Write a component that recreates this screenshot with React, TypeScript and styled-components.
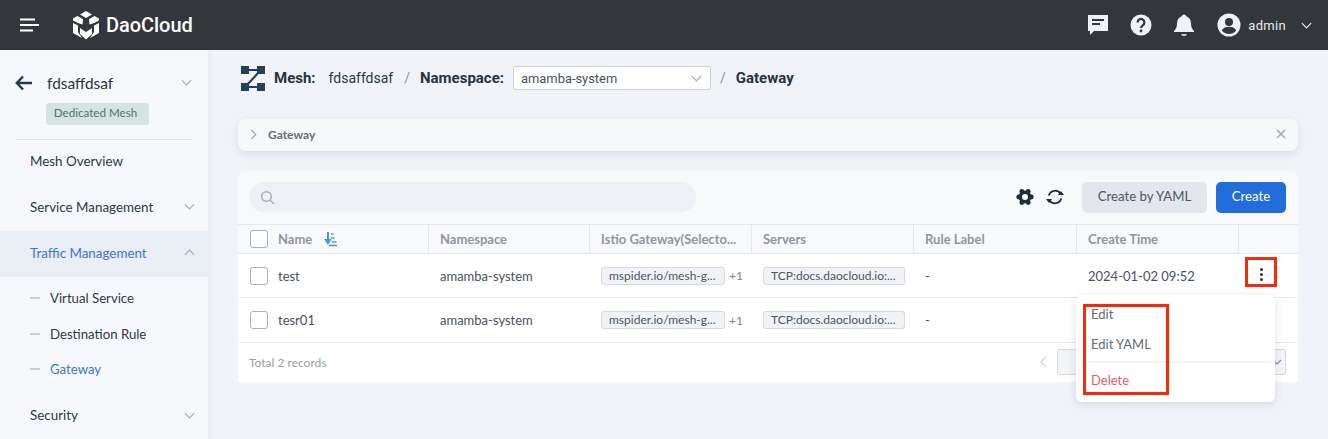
import React from "react";
import styled, { createGlobalStyle } from "styled-components";

const Global = createGlobalStyle`
  html, body { margin: 0; padding: 0; height: 100%; overflow: hidden; background: #f1f3f8; }
  * { box-sizing: border-box; }
  body { font-family: "Lato", "Open Sans", sans-serif; }
`;

const Page = styled.div`width: 1328px; height: 439px; display: flex; flex-direction: column; overflow: hidden;`;
const TopBar = styled.header`height: 50px; flex: none; background: #33363b; display: flex; align-items: center; padding: 0 15px 0 20px; color: #fff;`;
const Burger = styled.svg`width: 19px; height: 14px; flex: none;`;
const Logo = styled.div`display: flex; align-items: center; margin-left: 33px; gap: 6px;`;
const LogoText = styled.span`font: 500 20px/1 "Roboto", sans-serif; letter-spacing: -0.05px;`;
const TopRight = styled.div`margin-left: auto; display: flex; align-items: center;`;
const TopIcon = styled.svg`width: 24px; height: 24px; margin-right: 19px; &:nth-child(3) { margin-right: 21px; }`;
const UserName = styled.span`font: 13px "Roboto", sans-serif; color: #e8ebf2; margin: 0 14px 0 7px; letter-spacing: .3px;`;

const Body = styled.div`flex: 1; display: flex; min-height: 0;`;
const Side = styled.aside`width: 208px; flex: none; background: #f6f8fc; box-shadow: 2px 0 6px rgba(40,50,80,.05); padding-top: 20px; display: flex; flex-direction: column;`;
const MeshHead = styled.div`display: flex; align-items: center; height: 26px; padding-left: 15px; color: #3a3f48;`;
const MeshName = styled.span`font-size: 15.4px; margin-left: 14px; flex: 1; color: #2d3440;`;
const Badge = styled.span`align-self: flex-start; margin: 7px 0 0 46px; width: 103px; height: 22px; padding-right: 4px; border-radius: 3px; background: #d5e4e2; color: #55706f; font-size: 11.6px; line-height: 20px; text-align: center;`;
const Divider = styled.div`height: 1px; background: #e1e4ea; margin: 14px 15px -1px; flex: none;`;
const NavItem = styled.div<{ $active?: boolean }>`height: 46px; flex: none; display: flex; align-items: center; justify-content: space-between; padding: 0 12px 2px 30px; font-size: 13.4px; color: ${p => (p.$active ? "#3d74d8" : "#2f3744")}; background: ${p => (p.$active ? "#e9edf4" : "transparent")};`;
const SubList = styled.div`padding: 4px 0 6px; flex: none;`;
const SubItem = styled.div<{ $active?: boolean }>`height: 35.5px; display: flex; align-items: center; padding-left: 30px; font-size: 13.2px; color: ${p => (p.$active ? "#3d74d8" : "#2f3744")};
  &::before { content: ""; width: 10px; height: 2px; background: #c9ced8; margin-right: 10px; }`;
const Chev = styled.svg`width: 13px; height: 13px; flex: none;`;

const Main = styled.main`flex: 1; padding: 16px 30px 0; min-width: 0;`;
const Crumbs = styled.div`display: flex; align-items: center; height: 24px; margin-left: 3px; color: #2b3644; font: 14px "Roboto", sans-serif;`;
const CrumbStrong = styled.strong`font-weight: 700; font-size: 15px; color: #29323f;`;
const CrumbValue = styled.span`margin-left: 13px;`;
const CrumbSep = styled.span`color: #8a93a0; margin: 0 10px 0 11px;`;
const Select = styled.div`width: 198px; height: 24px; margin: 0 -2px 0 9px; border: 1px solid #cdd1da; border-radius: 3px; background: #fff; display: flex; align-items: center; justify-content: space-between; padding: 0 7px; font-size: 12.9px; color: #47505e;`;
const Collapse = styled.div`height: 32px; margin-top: 29px; background: #f7f8fa; border-radius: 8px; box-shadow: 0 3px 8px rgba(50,60,90,.11); display: flex; align-items: center; padding: 0 12px 2px 9px; gap: 8px; font-size: 12px; font-weight: 700; color: #676d77;`;
const CollapseTitle = styled.span`flex: 1;`;

const Card = styled.section`margin-top: 20px; height: 211px; background: #fff; border-radius: 8px 8px 0 0; position: relative;`;
const Tools = styled.div`height: 53px; background: #f8f9fb; border-radius: 8px 8px 0 0; display: flex; align-items: center; padding: 0 12px 1px 11px;`;
const Search = styled.div`width: 447px; height: 30px; border-radius: 15px; background: #eef0f5; display: flex; align-items: center; padding-left: 11px;`;
const ToolIcon = styled.svg`width: 18px; height: 18px; margin-right: 12px;`;
const ToolGroup = styled.div`margin-left: auto; display: flex; align-items: center;`;
const Btn = styled.div<{ $primary?: boolean }>`height: 31px; padding-bottom: 2px; border-radius: 5px; display: flex; align-items: center; justify-content: center; font-size: 13.2px; margin-left: ${p => (p.$primary ? "9px" : "6px")}; width: ${p => (p.$primary ? "70px" : "125px")}; background: ${p => (p.$primary ? "#216ddb" : "#e3e6ed")}; color: ${p => (p.$primary ? "#fff" : "#4f5662")};`;
const Row = styled.div<{ $head?: boolean; $h: number }>`display: grid; grid-template-columns: 191px 161px 162px 162px 163px 162px 59px; height: ${p => p.$h}px; align-items: center; background: ${p => (p.$head ? "#f8f9fb" : "#fff")}; border-top: ${p => (p.$head ? "1px solid #e6e8ef" : "none")}; border-bottom: 1px solid #e6e8ef;`;
const HeadCell = styled.div`height: 100%; padding-left: 11px; display: flex; align-items: center; border-right: 1px solid #e6e8ef; font-size: 13px; font-weight: 700; color: #91959d; white-space: nowrap; &:last-child { border-right: 0; }`;
const Cell = styled.div`padding-left: 11px; display: flex; align-items: center; font-size: 13px; color: #4a5160; white-space: nowrap;`;
const Check = styled.span`width: 18px; height: 18px; border: 1px solid #a9afbb; border-radius: 3px; background: #fff; margin: 0 10px 0 1px; flex: none;`;
const Tag = styled.span`width: 124px; height: 18px; border: 1px solid #d4d8e0; border-radius: 3px; background: #f0f2f6; font-size: 12px; line-height: 16px; padding-left: 7px; color: #4d5562; margin-right: 4px;`;
const Tag2 = styled(Tag)`width: 142px;`;
const More = styled.span`color: #7b828e; font-size: 12px;`;
const Foot = styled.div`height: 38px; display: flex; align-items: center; padding-left: 11px; font-size: 12px; color: #9a9ea6; position: relative;`;
const PagerLeft = styled.svg`width: 12px; height: 12px; margin-left: 712px;`;
const PageBox = styled.div`height: 26px; width: 229px; margin-left: 7px; border: 1px solid #d4d8e0; border-radius: 3px; background: #f3f4f7; display: flex; align-items: center; justify-content: flex-end; padding-right: 3px;`;

const Menu = styled.div`position: absolute; left: 838px; top: 124px; width: 199px; height: 107px; background: #fff; border-radius: 6px; box-shadow: 0 2px 10px rgba(40,50,80,.14); padding-top: 4px; font-size: 13px; color: #666a72;`;
const MenuItem = styled.div<{ $danger?: boolean }>`height: 30px; padding-left: 15px; display: flex; align-items: center; color: ${p => (p.$danger ? "#ea5b63" : "#666a72")};`;
const MenuLine = styled.div`height: 2px; background: #f3f4f6; margin: 2px 5px 2px;`;
const Mark = styled.div<{ $l: number; $t: number; $w: number; $h: number }>`position: absolute; left: ${p => p.$l}px; top: ${p => p.$t}px; width: ${p => p.$w}px; height: ${p => p.$h}px; border: 3px solid #f52a0c; pointer-events: none;`;
const Dots = styled.div`position: absolute; left: 1022px; top: 97px; width: 3px; display: flex; flex-direction: column; gap: 2px; span { height: 3px; border-radius: 50%; background: #2a3340; }`;

const Down = ({ c = "#a6adb9", up = false }: { c?: string; up?: boolean }) => (
  <Chev viewBox="0 0 14 14"><path d={up ? "M2 9.5 7 4.5l5 5" : "M2 4.5l5 5 5-5"} fill="none" stroke={c} strokeWidth="1.3" /></Chev>
);

const rows = ["test", "tesr01"];
const heads = ["Namespace", "Istio Gateway(Selecto...", "Servers", "Rule Label", "Create Time", ""];
const lobes = [[15.300, 9], [12.200, 14.500], [5.800, 14.500], [2.700, 9], [5.800, 3.500], [12.200, 3.500]];

export default function App() {
  return (
    <Page>
      <Global />
      <TopBar>
        <Burger viewBox="0 0 19 14"><path d="M0 1.5h15M0 7h19M0 12.5h13" stroke="#fff" strokeWidth="2" /></Burger>
        <Logo>
          <svg width="28" height="29" viewBox="0 0 28 29">
            <path d="M14 0l6 3.500-6 3.500-6-3.500zM5.500 5l5.500 3.200-.5 5.300-4.500-1.500-5-2.500V7.500zM22.500 5 17 8.200l.5 5.300 4.500-1.500 5-2.500V7.500zM1 12l5 2.500V21l4 6-9-5zM27 12l-5 2.500V21l-4 6 9-5zM8 17l6 4 6-4v6l-6 5.500L8 23z" fill="#fff" />
          </svg>
          <LogoText>DaoCloud</LogoText>
        </Logo>
        <TopRight>
          <TopIcon viewBox="0 0 24 24"><path d="M2 2h20v16H8l-4 4v-4H2z" fill="#eef1f7" /><path d="M6 7h12M6 11h8" stroke="#33363b" strokeWidth="1.8" /></TopIcon>
          <TopIcon viewBox="0 0 24 24"><circle cx="12" cy="12" r="10.5" fill="#eef1f7" /><path d="M8.6 9.4a3.4 3.4 0 1 1 5.2 2.9c-1.2.8-1.8 1.3-1.8 2.7" fill="none" stroke="#33363b" strokeWidth="2.2" /><circle cx="12" cy="18" r="1.4" fill="#33363b" /></TopIcon>
          <TopIcon viewBox="0 0 24 24"><path d="M12 1.5c1.2 0 2 .8 2 1.8 3.400 1 5 3.700 5 7.200 0 3.500 1 5.500 3 7.500v1H2v-1c2-2 3-4 3-7.500 0-3.500 1.600-6.200 5-7.200 0-1 .8-1.800 2-1.800z" fill="#eef1f7" /><path d="M9 21h6c-.5 1.500-1.600 2.200-3 2.200S9.500 22.500 9 21z" fill="#c3c8d2" /></TopIcon>
          <svg width="24" height="24" viewBox="0 0 24 24"><circle cx="12" cy="12" r="11.500" fill="#eef1f7" /><circle cx="12" cy="9" r="4" fill="#33363b" /><path d="M4.800 17.500c1.500-2.700 4-3.700 7.200-3.700s5.700 1 7.200 3.700c-1.700 2.200-4.300 3.500-7.200 3.500s-5.500-1.300-7.200-3.500z" fill="#33363b" /></svg>
          <UserName>admin</UserName>
          <Down c="#e8ebf2" />
        </TopRight>
      </TopBar>
      <Body>
        <Side>
          <MeshHead>
            <svg width="18" height="16" viewBox="0 0 18 16"><path d="M8 1.500 1.800 8 8 14.500M2 8h15" fill="none" stroke="#24384f" strokeWidth="2.400" /></svg>
            <MeshName>fdsaffdsaf</MeshName>
            <Chev viewBox="0 0 14 14" style={{ marginRight: 15 }}><path d="M2 4.500l5 5 5-5" fill="none" stroke="#a6adb9" strokeWidth="1.300" /></Chev>
          </MeshHead>
          <Badge>Dedicated Mesh</Badge>
          <Divider />
          <NavItem>Mesh Overview</NavItem>
          <NavItem>Service Management<Down /></NavItem>
          <NavItem $active>Traffic Management<Down up /></NavItem>
          <SubList>
            <SubItem>Virtual Service</SubItem>
            <SubItem>Destination Rule</SubItem>
            <SubItem $active>Gateway</SubItem>
          </SubList>
          <NavItem>Security<Down /></NavItem>
        </Side>
        <Main>
          <Crumbs>
            <svg width="24" height="25" viewBox="0 0 24 25" style={{ marginRight: 9, flex: "none" }}>
              <path d="M4 4h16M4 21h16M6 19 18 6" fill="none" stroke="#25405c" strokeWidth="2.200" />
              <path d="M0 0h8v8H0zM16 0h8v8h-8zM0 17h8v8H0zM16 17h8v8h-8z" fill="#25405c" />
            </svg>
            <CrumbStrong>Mesh:</CrumbStrong>
            <CrumbValue>fdsaffdsaf</CrumbValue>
            <CrumbSep>/</CrumbSep>
            <CrumbStrong>Namespace:</CrumbStrong>
            <Select>amamba-system<Down /></Select>
            <CrumbSep>/</CrumbSep>
            <CrumbStrong>Gateway</CrumbStrong>
          </Crumbs>
          <Collapse>
            <Chev viewBox="0 0 14 14"><path d="M4.500 2l5 5-5 5" fill="none" stroke="#a0a6b0" strokeWidth="1.300" /></Chev>
            <CollapseTitle>Gateway</CollapseTitle>
            <svg width="10" height="10" viewBox="0 0 10 10"><path d="M1 1l8 8M9 1 1 9" stroke="#a0a6b0" strokeWidth="1.300" /></svg>
          </Collapse>
          <Card>
            <Tools>
              <Search>
                <svg width="15" height="15" viewBox="0 0 15 15"><circle cx="6.500" cy="6.500" r="4.800" fill="none" stroke="#aab0ba" strokeWidth="1.500" /><path d="M10 10l4 4" stroke="#aab0ba" strokeWidth="1.500" /></svg>
              </Search>
              <ToolGroup>
                <ToolIcon viewBox="0 0 18 18">
                  <circle cx="9" cy="9" r="6.500" fill="#1f2c3d" />
                  {lobes.map(([x, y]) => <circle key={`${x}-${y}`} cx={x} cy={y} r="2.400" fill="#1f2c3d" />)}
                  <circle cx="9" cy="9" r="3" fill="#f8f9fb" />
                </ToolIcon>
                <ToolIcon viewBox="0 0 18 18"><path d="M2.800 7.500A6.500 6.500 0 0 1 14.700 6M15.200 10.500A6.500 6.500 0 0 1 3.300 12" fill="none" stroke="#1f2c3d" strokeWidth="1.800" /><path d="M12 7h6l-3-4zM6 11H0l3 4z" fill="#1f2c3d" /></ToolIcon>
                <Btn>Create by YAML</Btn>
                <Btn $primary>Create</Btn>
              </ToolGroup>
            </Tools>
            <Row $head $h={30}>
              <HeadCell>
                <Check />Name
                <svg width="13" height="15" viewBox="0 0 13 15" style={{ marginLeft: 12 }}><path d="M4 0v7" stroke="#3f96f0" strokeWidth="2" /><path d="M0 7h7.500L4 13z" fill="#3f96f0" /><path d="M7 2h2.500M7 6h3.500M8 10h4.500M5 13.500h8" stroke="#3f96f0" strokeWidth="1.500" /></svg>
              </HeadCell>
              {heads.map((h, i) => <HeadCell key={i}>{h}</HeadCell>)}
            </Row>
            {rows.map((n, i) => (
              <Row key={n} $h={i === 0 ? 44 : 45}>
                <Cell><Check />{n}</Cell>
                <Cell>amamba-system</Cell>
                <Cell><Tag>mspider.io/mesh-g...</Tag><More>+1</More></Cell>
                <Cell><Tag2>TCP:docs.daocloud.io:...</Tag2></Cell>
                <Cell>-</Cell>
                <Cell>{i === 0 ? "2024-01-02 09:52" : ""}</Cell>
                <Cell />
              </Row>
            ))}
            <Foot>
              Total 2 records
              <PagerLeft viewBox="0 0 12 12"><path d="M8 1 3 6l5 5" fill="none" stroke="#d2d5dc" strokeWidth="1.300" /></PagerLeft>
              <PageBox><svg width="10" height="10" viewBox="0 0 10 10"><path d="M1 3l4 4 4-4" fill="none" stroke="#8a919d" strokeWidth="1.200" /></svg></PageBox>
            </Foot>
            <Dots><span /><span /><span /></Dots>
            <Menu>
              <MenuItem>Edit</MenuItem>
              <MenuItem>Edit YAML</MenuItem>
              <MenuLine />
              <MenuItem $danger>Delete</MenuItem>
            </Menu>
            <Mark $l={1007} $t={86} $w={32} $h={30} />
            <Mark $l={845} $t={133} $w={86} $h={91} />
          </Card>
        </Main>
      </Body>
    </Page>
  );
}
